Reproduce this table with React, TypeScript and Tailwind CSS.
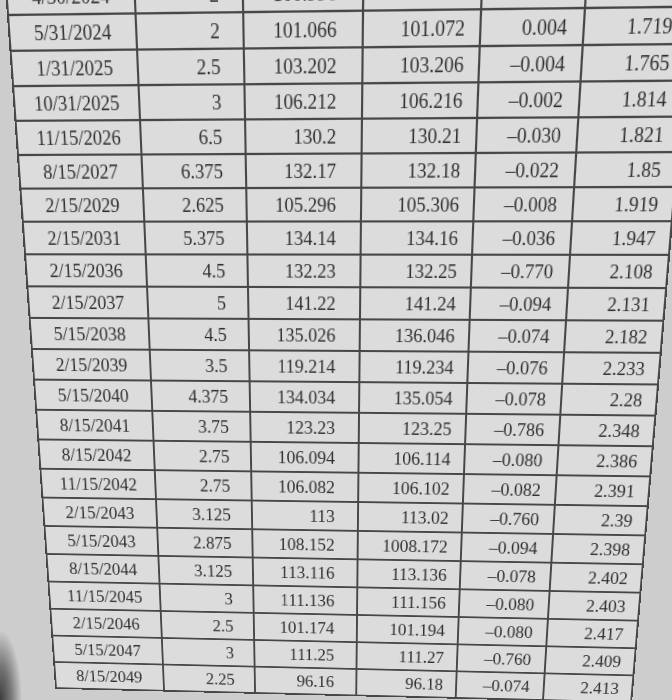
import { useMemo } from "react";

type Pt = [number, number];

const rows: string[][] = [
  ["4/30/2024", "2", "100.996", "101.002", "0.006", "1.690"],
  ["5/31/2024", "2", "101.066", "101.072", "0.004", "1.719"],
  ["1/31/2025", "2.5", "103.202", "103.206", "–0.004", "1.765"],
  ["10/31/2025", "3", "106.212", "106.216", "–0.002", "1.814"],
  ["11/15/2026", "6.5", "130.2", "130.21", "–0.030", "1.821"],
  ["8/15/2027", "6.375", "132.17", "132.18", "–0.022", "1.85"],
  ["2/15/2029", "2.625", "105.296", "105.306", "–0.008", "1.919"],
  ["2/15/2031", "5.375", "134.14", "134.16", "–0.036", "1.947"],
  ["2/15/2036", "4.5", "132.23", "132.25", "–0.770", "2.108"],
  ["2/15/2037", "5", "141.22", "141.24", "–0.094", "2.131"],
  ["5/15/2038", "4.5", "135.026", "136.046", "–0.074", "2.182"],
  ["2/15/2039", "3.5", "119.214", "119.234", "–0.076", "2.233"],
  ["5/15/2040", "4.375", "134.034", "135.054", "–0.078", "2.28"],
  ["8/15/2041", "3.75", "123.23", "123.25", "–0.786", "2.348"],
  ["8/15/2042", "2.75", "106.094", "106.114", "–0.080", "2.386"],
  ["11/15/2042", "2.75", "106.082", "106.102", "–0.082", "2.391"],
  ["2/15/2043", "3.125", "113", "113.02", "–0.760", "2.39"],
  ["5/15/2043", "2.875", "108.152", "1008.172", "–0.094", "2.398"],
  ["8/15/2044", "3.125", "113.116", "113.136", "–0.078", "2.402"],
  ["11/15/2045", "3", "111.136", "111.156", "–0.080", "2.403"],
  ["2/15/2046", "2.5", "101.174", "101.194", "–0.080", "2.417"],
  ["5/15/2047", "3", "111.25", "111.27", "–0.760", "2.409"],
  ["8/15/2049", "2.25", "96.16", "96.18", "–0.074", "2.413"],
];

const cellClass = [
  "justify-center",
  "justify-end pr-[21px]",
  "justify-end pr-[23px]",
  "justify-end pr-[13px]",
  "justify-end pr-[14px]",
  "justify-end pr-[13px]",
];

// the table is printed flat and then tilted like the photo with a homography
function solveHomography(src: Pt[], dst: Pt[]) {
  const A: number[][] = [];
  const B: number[] = [];
  for (let i = 0; i < 4; i++) {
    const [x, y] = src[i];
    const [X, Y] = dst[i];
    A.push([x, y, 1, 0, 0, 0, -x * X, -y * X]);
    B.push(X);
    A.push([0, 0, 0, x, y, 1, -x * Y, -y * Y]);
    B.push(Y);
  }
  const n = 8;
  for (let c = 0; c < n; c++) {
    let p = c;
    for (let r = c + 1; r < n; r++) {
      if (Math.abs(A[r][c]) > Math.abs(A[p][c])) p = r;
    }
    [A[c], A[p]] = [A[p], A[c]];
    [B[c], B[p]] = [B[p], B[c]];
    for (let r = 0; r < n; r++) {
      if (r === c) continue;
      const f = A[r][c] / A[c][c];
      for (let k = c; k < n; k++) A[r][k] -= f * A[c][k];
      B[r] -= f * B[c];
    }
  }
  return B.map((v, i) => v / A[i][i]);
}

export default function App() {
  const transform = useMemo(() => {
    const rowH = 31;
    const left = 1;
    const right = 2 + 120 + 100 + 110 + 107 + 93 - 1;
    const top = 2 + rowH - 1;
    const bottom = 2 + rowH * rows.length - 1;
    const [a, b, c, d, e, f, g, h] = solveHomography(
      [
        [left, top],
        [right, top],
        [left, bottom],
        [right, bottom],
      ],
      [
        [8, 15],
        [585, 8],
        [56, 688],
        [543, 700],
      ],
    );
    return `matrix3d(${a},${d},0,${g},${b},${e},0,${h},0,0,1,0,${c},${f},0,1)`;
  }, []);

  return (
    <div className="relative h-[700px] w-[672px] overflow-hidden bg-[#cdcdcd] bg-[radial-gradient(ellipse_22px_70px_at_0%_100%,#3c3c3c_0%,#777_50%,#cdcdcd_100%)]">
      <div
        className="w-fit origin-top-left border-t-2 border-l-2 border-[#474747] bg-[#dcdcdc] font-['Liberation_Serif','Times_New_Roman',serif] text-[18px] text-[#2f2f2f]"
        style={{ transform }}>
        {rows.map((row, i) => (
          <div
            key={i}
            className="grid h-[31px] grid-cols-[120px_100px_110px_107px_93px_93px]">
            {row.map((cell, j) => (
              <div
                key={j}
                className={`flex items-center border-r-2 border-b-2 border-[#474747] leading-none ${cellClass[j]}`}>
                {cell}
              </div>
            ))}
          </div>
        ))}
      </div>
    </div>
  );
}
